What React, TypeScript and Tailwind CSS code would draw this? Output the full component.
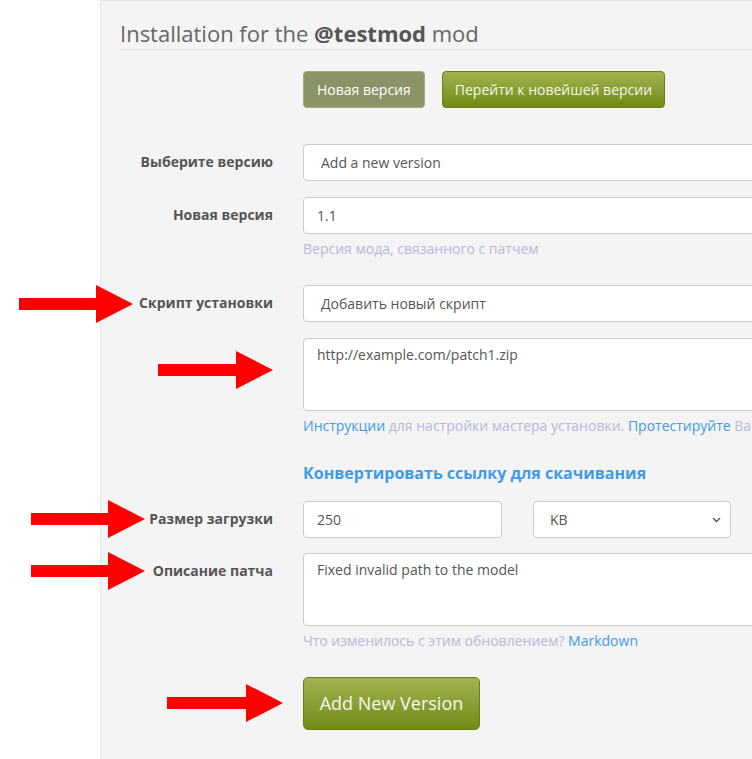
import React from "react";

const inputBox =
  "h-[37px] rounded-[4px] border border-[#cccccc] bg-white text-[14px] leading-[20px] text-[#555] flex items-center";

function Arrow({ left, top, length }: { left: number; top: number; length: number }) {
  const base = length - 37;
  return (
    <svg
      className="absolute"
      style={{ left, top }}
      width={length}
      height={38}
      viewBox={`0 0 ${length} 38`}
    >
      <path
        d={`M0 13 H${base} V0 L${length} 19 L${base} 38 V25 H0 Z`}
        fill="#ff0000"
      />
    </svg>
  );
}

function Label({ children }: { children: React.ReactNode }) {
  return (
    <div className="w-[153px] shrink-0 pt-[8px] text-right text-[14px] font-bold leading-[20px] text-[#555]">
      {children}
    </div>
  );
}

function Help({ children }: { children: React.ReactNode }) {
  return (
    <div className="mt-[5px] whitespace-nowrap text-[14px] leading-[20px] text-[#b6b8de]">
      {children}
    </div>
  );
}

export default function App() {
  return (
    <div className="relative h-[759px] w-[752px] overflow-hidden bg-white font-['Open_Sans',sans-serif]">
      <div className="ml-[100px] h-[759px] w-[700px] border-l border-t border-[#e4e4e4] bg-[#f4f4f4] pl-[19px] pt-[17px]">
        <h2 className="border-b border-[#e2e2e2] pb-[1px] text-[22px] leading-[30px] text-[#666]">
          Installation for the <span className="font-bold text-[#555]">@testmod</span> mod
        </h2>

        {/* top buttons */}
        <div className="ml-[183px] mt-[21px] flex gap-[17px]">
          <button className="h-[37px] rounded-[4px] border border-[#a2ab7c] bg-[#8b9467] px-[13px] text-[14px] text-white">
            Новая версия
          </button>
          <button className="h-[37px] rounded-[4px] border border-[#6b7f14] bg-gradient-to-b from-[#a3b34f] to-[#6f8a0e] px-[12px] text-[14px] text-[#f4f6e4]">
            Перейти к новейшей версии
          </button>
        </div>

        {/* version select */}
        <div className="mt-[36px] flex">
          <Label>Выберите версию</Label>
          <div className="ml-[30px] flex-1">
            <div className={inputBox + " w-full pl-[17px]"}>Add a new version</div>
          </div>
        </div>

        <div className="mt-[16px] flex">
          <Label>Новая версия</Label>
          <div className="ml-[30px] flex-1">
            <div className={inputBox + " w-full pl-[13px]"}>1.1</div>
            <Help>Версия мода, связанного с патчем</Help>
          </div>
        </div>

        {/* install script */}
        <div className="mt-[26px] flex">
          <Label>Скрипт установки</Label>
          <div className="ml-[30px] flex-1">
            <div className={inputBox + " w-full pl-[17px]"}>Добавить новый скрипт</div>
            <div className="mt-[16px] h-[73px] w-full rounded-[4px] border border-[#cccccc] bg-white pl-[13px] pt-[6px] text-[14px] leading-[20px] text-[#555]">
              http://example.com/patch1.zip
            </div>
            <Help>
              <span className="text-[#3d9be8]">Инструкции</span> для настройки мастера установки.{" "}
              <span className="text-[#3d9be8]">Протестируйте</span> Ваш скрипт
            </Help>
            <div className="mt-[26px] text-[16px] font-bold leading-[22px] text-[#3d9be8]">
              Конвертировать ссылку для скачивания
            </div>
          </div>
        </div>

        {/* size */}
        <div className="mt-[17px] flex">
          <Label>Размер загрузки</Label>
          <div className="ml-[30px] flex flex-1 gap-[31px]">
            <div className={inputBox + " w-[199px] pl-[13px]"}>250</div>
            <div className={inputBox + " w-[198px] justify-between pl-[16px] pr-[9px]"}>
              <span>KB</span>
              <svg width="9" height="6" viewBox="0 0 9 6">
                <path d="M1 1 L4.5 4.5 L8 1" stroke="#555" strokeWidth="1.4" fill="none" />
              </svg>
            </div>
          </div>
        </div>

        {/* description */}
        <div className="mt-[15px] flex">
          <Label>Описание патча</Label>
          <div className="ml-[30px] flex-1">
            <div className="h-[73px] w-full rounded-[4px] border border-[#cccccc] bg-white pl-[13px] pt-[6px] text-[14px] leading-[20px] text-[#555]">
              Fixed invalid path to the model
            </div>
            <Help>
              Что изменилось с этим обновлением? <span className="text-[#3d9be8]">Markdown</span>
            </Help>
            <button className="mt-[26px] h-[53px] w-[177px] rounded-[5px] border border-[#6b7e1a] bg-gradient-to-b from-[#a2b250] to-[#718c12] text-[18px] text-[#f8f8ec]">
              Add New Version
            </button>
          </div>
        </div>
      </div>

      <Arrow left={19} top={285} length={114} />
      <Arrow left={158} top={351} length={115} />
      <Arrow left={31} top={500} length={114} />
      <Arrow left={31} top={552} length={114} />
      <Arrow left={167} top={684} length={116} />
    </div>
  );
}
